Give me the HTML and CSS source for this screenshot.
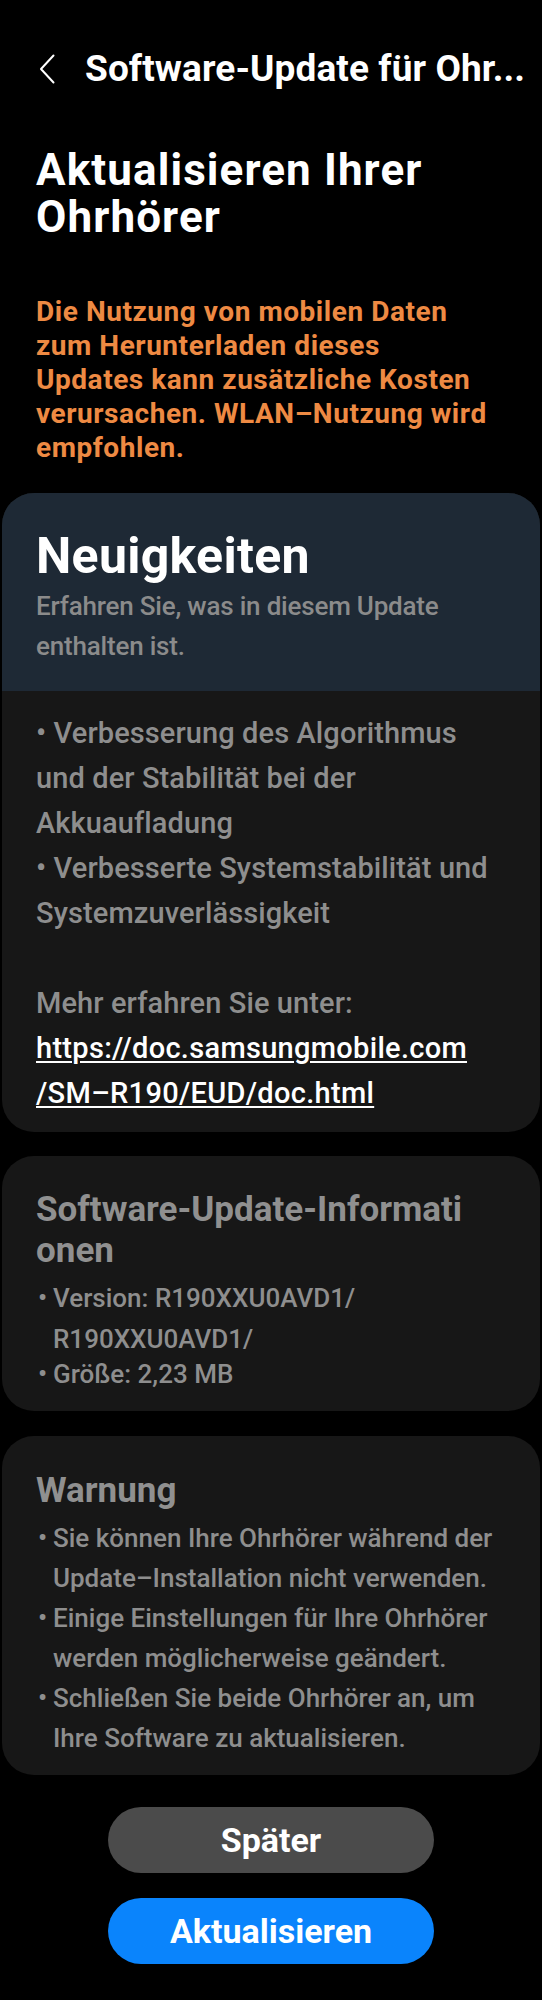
FILE: index.html
```html
<!DOCTYPE html>
<html lang="de">
<head>
<meta charset="utf-8">
<title>Software-Update für Ohrhörer</title>
<link rel="stylesheet" href="styles.css">
</head>
<body>
<div class="screen">
  <header class="appbar">
    <svg class="back" viewBox="0 0 16 30" aria-hidden="true"><path d="M14.5 1.5 L2 15 L14.5 28.5" fill="none" stroke="#fff" stroke-width="2" stroke-linecap="round" stroke-linejoin="round"/></svg>
    <h1 class="appbar-title">Software-Update für Ohr...</h1>
  </header>

  <h2 class="page-head">Aktualisieren Ihrer<br>Ohrhörer</h2>

  <p class="notice">Die Nutzung von mobilen Daten<br>zum Herunterladen dieses<br>Updates kann zusätzliche Kosten<br>verursachen. WLAN–Nutzung wird<br>empfohlen.</p>

  <section class="card card-news">
    <div class="card-head">
      <h3 class="news-title">Neuigkeiten</h3>
      <p class="news-sub">Erfahren Sie, was in diesem Update<br>enthalten ist.</p>
    </div>
    <div class="card-body">
      <p>• Verbesserung des Algorithmus<br>und der Stabilität bei der<br>Akkuaufladung<br>• Verbesserte Systemstabilität und<br>Systemzuverlässigkeit</p>
      <p class="more">Mehr erfahren Sie unter:<br><a class="link" href="#">https://doc.samsungmobile.com<br>/SM–R190/EUD/doc.html</a></p>
    </div>
  </section>

  <section class="card card-info">
    <h3 class="section-title">Software-Update-Informati<br>onen</h3>
    <ul class="items">
      <li class="item item-version"><span class="dot">•</span><span>Version: R190XXU0AVD1/<br>R190XXU0AVD1/</span></li>
      <li class="item item-size"><span class="dot">•</span><span>Größe: 2,23 MB</span></li>
    </ul>
  </section>

  <section class="card card-warn">
    <h3 class="section-title">Warnung</h3>
    <ul class="items warn-items">
      <li class="item"><span class="dot">•</span><span>Sie können Ihre Ohrhörer während der<br>Update–Installation nicht verwenden.</span></li>
      <li class="item"><span class="dot">•</span><span>Einige Einstellungen für Ihre Ohrhörer<br>werden möglicherweise geändert.</span></li>
      <li class="item"><span class="dot">•</span><span>Schließen Sie beide Ohrhörer an, um<br>Ihre Software zu aktualisieren.</span></li>
    </ul>
  </section>

  <div class="actions">
    <button class="btn btn-later">Später</button>
    <button class="btn btn-update">Aktualisieren</button>
  </div>
</div>
</body>
</html>
```

FILE: styles.css
```css
* { box-sizing: border-box; }

html, body {
  margin: 0;
  padding: 0;
  background: #000;
}

body {
  font-family: Roboto, "Noto Sans", "Liberation Sans", sans-serif;
  width: 542px;
  min-height: 2000px;
}

.screen {
  width: 542px;
  padding-bottom: 35px;
}

h1, h2, h3, p, ul { margin: 0; padding: 0; }

.appbar {
  height: 137px;
  display: flex;
  align-items: center;
}

.back {
  width: 16px;
  height: 30px;
  margin-left: 39px;
  margin-right: 30px;
  flex: none;
}

.appbar-title {
  font-size: 37px;
  line-height: 44px;
  font-weight: 700;
  color: #fff;
  white-space: nowrap;
  overflow: hidden;
  letter-spacing: 0.1px;
}

.page-head {
  margin-top: 10px;
  padding: 0 36px;
  font-size: 44px;
  line-height: 47px;
  font-weight: 700;
  color: #fff;
  letter-spacing: 1.1px;
}

.notice {
  margin-top: 54px;
  padding: 0 36px;
  font-size: 28px;
  line-height: 34px;
  font-weight: 700;
  color: #ee8a43;
  letter-spacing: 0.55px;
}

.card {
  margin: 0 2px;
  border-radius: 32px;
  background: #171717;
  overflow: hidden;
}

.card-news { margin-top: 28px; }

.card-head {
  background: #1e2935;
  padding: 33px 34px 25px;
}

.news-title {
  font-size: 50px;
  line-height: 60px;
  font-weight: 700;
  color: #fff;
  letter-spacing: 0.3px;
}

.news-sub {
  font-size: 26px;
  line-height: 40px;
  font-weight: 500;
  color: #8b8b8b;
  letter-spacing: -0.2px;
}

.card-body {
  padding: 20px 34px 16px;
  font-size: 29px;
  line-height: 45px;
  font-weight: 500;
  color: #8e8e8e;
  letter-spacing: 0.1px;
}

.more { margin-top: 45px; }

.link {
  color: #fff;
  text-decoration: underline;
  text-decoration-thickness: 2px;
  text-underline-offset: 3px;
  letter-spacing: 0.3px;
}

.card-info {
  margin-top: 24px;
  padding: 33px 34px 23px;
}

.card-warn {
  margin-top: 25px;
  padding: 34px 34px 17px;
}

.section-title {
  font-size: 35px;
  line-height: 41px;
  font-weight: 700;
  color: #909090;
}

.items {
  list-style: none;
  margin-top: 7px;
  font-size: 26px;
  font-weight: 500;
  color: #8e8e8e;
}

.item {
  display: flex;
  line-height: 40px;
}

.item-version { line-height: 41px; }
.item-size { line-height: 28px; }

.dot {
  width: 17px;
  flex: none;
  padding-left: 2px;
}

.actions {
  margin-top: 32px;
  display: flex;
  flex-direction: column;
  align-items: center;
  gap: 25px;
}

.btn {
  width: 326px;
  height: 66px;
  border: 0;
  border-radius: 33px;
  font-family: Roboto, "Noto Sans", sans-serif;
  font-size: 34px;
  font-weight: 700;
  color: #fff;
  padding: 0;
}

.btn-later { background: #4b4b4b; }
.btn-update { background: #0a84fc; }
```
